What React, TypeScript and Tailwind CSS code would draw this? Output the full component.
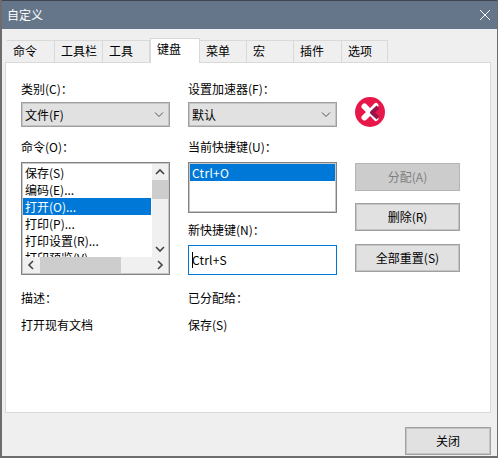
const font = { fontFamily: '"Noto Sans CJK SC", "Noto Sans", sans-serif' };

function Tab({ label, w, active }: { label: string; w: string; active?: boolean }) {
  if (active) {
    return (
      <div className={`${w} h-[25px] -mb-px z-10 border border-b-0 border-[#d9d9d9] bg-white pl-[6px] leading-[20px]`}>{label}</div>
    );
  }
  return (
    <div className={`${w} h-[22px] border border-b-0 border-l-0 border-[#d9d9d9] pl-[6px] leading-[20px] bg-[#efefef]`}>{label}</div>
  );
}

function Combo({ label }: { label: string }) {
  return (
    <div className="h-[25px] flex items-center justify-between bg-[#e1e1e1] border border-[#a0a0a0] shadow-[inset_0_0_0_1px_#c4c4c4] pl-[3px] pr-[5px]">
      <span>{label}</span>
      <svg width="10" height="6" viewBox="0 0 10 6" fill="none" stroke="#555" strokeWidth="1"><path d="M1 0.5 L5 4.5 L9 0.5" /></svg>
    </div>
  );
}

function Btn({ label, disabled, w = "w-[105px]" }: { label: string; disabled?: boolean; w?: string }) {
  return (
    <div className={`${w} h-[28px] flex items-center justify-center border ${disabled ? "bg-[#cccccc] border-[#b4b4b4] text-[#808080]" : "bg-[#e1e1e1] border-[#a0a0a0] shadow-[inset_0_0_0_1px_#c4c4c4] text-black"}`}>{label}</div>
  );
}

function Chev({ d }: { d: string }) {
  return (
    <svg width="16" height="16" viewBox="0 0 16 16" fill="none" stroke="#444" strokeWidth="1.6"><path d={d} /></svg>
  );
}

export default function App() {
  const rows = ["保存(S)", "编码(E)...", "打开(O)...", "打印(P)...", "打印设置(R)...", "打印预览(V)"];
  return (
    <div className="w-[498px] h-[458px] flex flex-col bg-[#efefef] border-l-2 border-r border-b-2 border-[#6d6d6d] text-[12px] text-black overflow-hidden" style={font}>
      <div className="h-[29px] -ml-[2px] -mr-px shrink-0 flex items-center justify-between bg-[#66768a] border-t border-[#3d4650] pl-[7px] pr-[7px] text-white">
        <span className="text-[12px]">自定义</span>
        <svg width="12" height="12" viewBox="0 0 12 12" fill="none" stroke="#fff" strokeWidth="1"><path d="M1 1 L11 11 M11 1 L1 11" /></svg>
      </div>

      <div className="flex items-end ml-[4px] mt-[9px] h-[24px] shrink-0 pl-px relative z-10">
        <Tab label="命令" w="w-[48px] border-l" />
        <Tab label="工具栏" w="w-[48px]" />
        <Tab label="工具" w="w-[47px]" />
        <Tab label="键盘" w="w-[50px]" active />
        <Tab label="菜单" w="w-[47px]" />
        <Tab label="宏" w="w-[47px]" />
        <Tab label="插件" w="w-[48px]" />
        <Tab label="选项" w="w-[46px]" />
      </div>

      <div className="ml-[3px] w-[486px] h-[351px] shrink-0 bg-white border border-[#d9d9d9] pl-[15px] pt-[18px] flex gap-[18px]">
        <div className="w-[149px] flex flex-col">
          <div className="h-[21px] leading-[16px]">类别(C)：</div>
          <Combo label="文件(F)" />
          <div className="mt-[10px] h-[25px] leading-[20px]">命令(O)：</div>
          <div className="h-[113px] border border-[#828282] shadow-[inset_0_0_0_1px_#c8c8c8] p-px flex flex-col overflow-hidden">
            <div className="flex h-[93px] shrink-0">
              <div className="w-[129px] overflow-hidden pr-px">
                {rows.map((r, i) => (
                  <div key={r} className={`h-[17px] leading-[17px] pl-[2px] ${i === 2 ? "bg-[#0078d7] text-white" : ""}`}>{r}</div>
                ))}
              </div>
              <div className="w-[16px] bg-[#f0f0f0] flex flex-col items-center justify-between">
                <div className="flex flex-col w-full items-center">
                  <Chev d="M4 10 L8 6 L12 10" />
                  <div className="w-full h-[19px] bg-[#cdcdcd]" />
                </div>
                <Chev d="M4 6 L8 10 L12 6" />
              </div>
            </div>
            <div className="h-[16px] w-[145px] bg-[#f0f0f0] flex items-center">
              <Chev d="M10 4 L6 8 L10 12" />
              <div className="ml-[1px] w-[81px] h-full bg-[#cdcdcd]" />
              <div className="flex-1" />
              <Chev d="M6 4 L10 8 L6 12" />
            </div>
          </div>
          <div className="mt-[15px] h-[27px] leading-[16px]">描述：</div>
          <div className="leading-[16px]">打开现有文档</div>
        </div>

        <div className="w-[149px] flex flex-col">
          <div className="h-[21px] leading-[16px]">设置加速器(F)：</div>
          <Combo label="默认" />
          <div className="mt-[10px] h-[25px] leading-[20px]">当前快捷键(U)：</div>
          <div className="h-[51px] border border-[#828282] shadow-[inset_0_0_0_1px_#c8c8c8] px-[1px] pt-[1px]">
            <div className="h-[17px] leading-[17px] bg-[#0078d7] text-white pl-[2px] tracking-[0.3px]">Ctrl+O</div>
          </div>
          <div className="mt-[9px] h-[23px] leading-[16px]">新快捷键(N)：</div>
          <div className="h-[30px] border border-[#0078d7] flex items-center pl-[3px]">
            <span className="w-px h-[16px] bg-black -mr-px" />
            <span className="tracking-[0.2px]">Ctrl+S</span>
          </div>
          <div className="mt-[15px] h-[27px] leading-[16px]">已分配给：</div>
          <div className="leading-[16px]">保存(S)</div>
        </div>

        <div className="w-[105px] flex flex-col">
          <div className="h-[66px] pt-[16px]">
            <svg width="30" height="30" viewBox="0 0 30 30">
              <circle cx="15" cy="15" r="15" fill="#e8174a" />
              <path d="M9.5 9.5 L15 15 L9.5 20.5" fill="none" stroke="#fff" strokeWidth="6" strokeLinecap="round" strokeLinejoin="round" />
              <path d="M21 8.5 L15 15 L21 21.5" fill="none" stroke="#fff" strokeWidth="5" strokeLinecap="round" strokeLinejoin="round" />
              <path d="M23 10 L17 15.5 L23 21" fill="none" stroke="#96124a" strokeWidth="4" strokeLinejoin="round" />
            </svg>
          </div>
          <div className="mt-[16px] flex flex-col gap-[12px]">
            <Btn label="分配(A)" disabled />
            <Btn label="删除(R)" />
            <div className="mt-px"><Btn label="全部重置(S)" /></div>
          </div>
        </div>
      </div>

      <div className="flex justify-end mt-[14px] pr-[6px] shrink-0">
        <Btn label="关闭" w="w-[86px]" />
      </div>
    </div>
  );
}
